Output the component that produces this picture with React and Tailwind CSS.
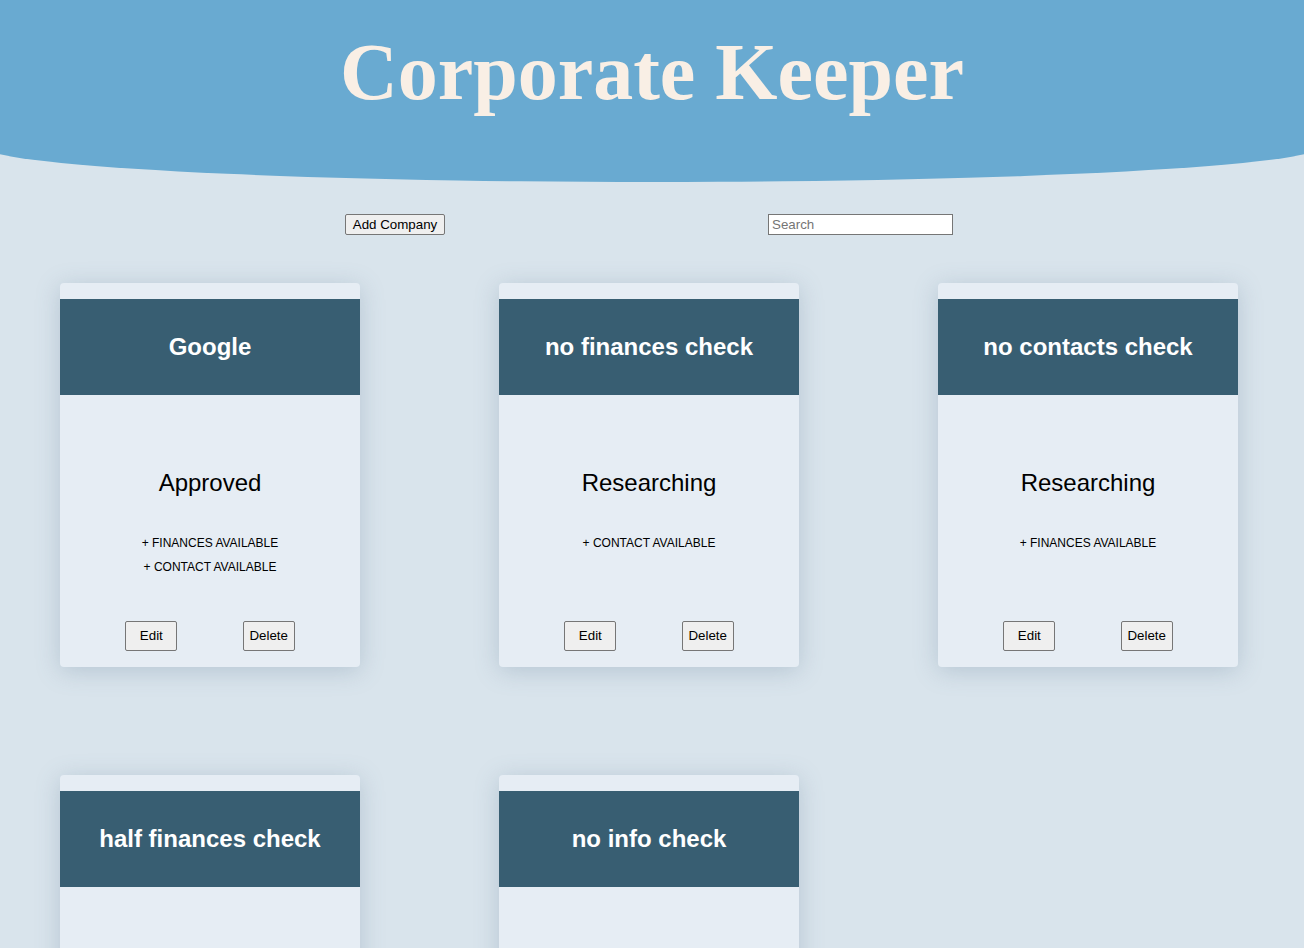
import React from "react";

const companies = [
  { name: "Google", status: "Approved", features: ["+ FINANCES AVAILABLE", "+ CONTACT AVAILABLE"] },
  { name: "no finances check", status: "Researching", features: ["+ CONTACT AVAILABLE"] },
  { name: "no contacts check", status: "Researching", features: ["+ FINANCES AVAILABLE"] },
  { name: "half finances check", status: "Researching", features: [] },
  { name: "no info check", status: "Researching", features: [] },
];

function Btn({ children }) {
  return (
    <button className="h-[30px] w-[52px] rounded-[2px] border border-[#767676] bg-[#efefef] text-[13.33px] text-black font-['Liberation_Sans',Arial,sans-serif]">
      {children}
    </button>
  );
}

function Card({ c }) {
  return (
    <div className="flex h-[384px] w-[300px] flex-col rounded-[4px] bg-[#e6edf4] pt-4 shadow-[0_4px_24px_rgba(90,120,145,0.28)]">
      <div className="flex h-[96px] items-center justify-center bg-[#385e72]">
        <h2 className="text-[24px] font-bold text-white">{c.name}</h2>
      </div>
      <div className="flex flex-1 flex-col items-center">
        <div className="mt-[74px] text-[24px] leading-[28px] text-black">{c.status}</div>
        <div className="mt-[34px] flex flex-col items-center">
          {c.features.map((f) => (
            <div key={f} className="text-[12px] leading-[24px] text-black">{f}</div>
          ))}
        </div>
        <div className="mt-auto mb-4 flex w-full justify-evenly">
          <Btn>Edit</Btn>
          <Btn>Delete</Btn>
        </div>
      </div>
    </div>
  );
}

export default function App() {
  return (
    <div className="min-h-[948px] overflow-hidden bg-[#d9e4ec] font-['Liberation_Sans',Arial,sans-serif]">
      <div className="-mx-[18px] h-[182px] rounded-bl-[670px_36px] rounded-br-[670px_36px] bg-[#69aad1] pt-[22px] text-center">
        <h1 className="font-['Liberation_Serif','Times_New_Roman',serif] text-[80px] font-bold leading-[100px] text-[#f9efe5]">
          Corporate Keeper
        </h1>
      </div>
      <div className="mt-[32px] flex items-center">
        <button className="ml-[345px] h-[21px] w-[100px] rounded-[2px] border border-[#767676] bg-[#efefef] text-[13.33px] leading-none text-black">
          Add Company
        </button>
        <input
          placeholder="Search"
          className="ml-[323px] h-[21px] w-[185px] border border-[#767676] bg-white px-[3px] text-[13.33px] text-black placeholder:text-[#757575] outline-none"
        />
      </div>
      <div className="ml-[60px] mt-[48px] grid grid-cols-[repeat(3,300px)] gap-x-[139px] gap-y-[108px] pb-10">
        {companies.map((c) => (
          <Card key={c.name} c={c} />
        ))}
      </div>
    </div>
  );
}
